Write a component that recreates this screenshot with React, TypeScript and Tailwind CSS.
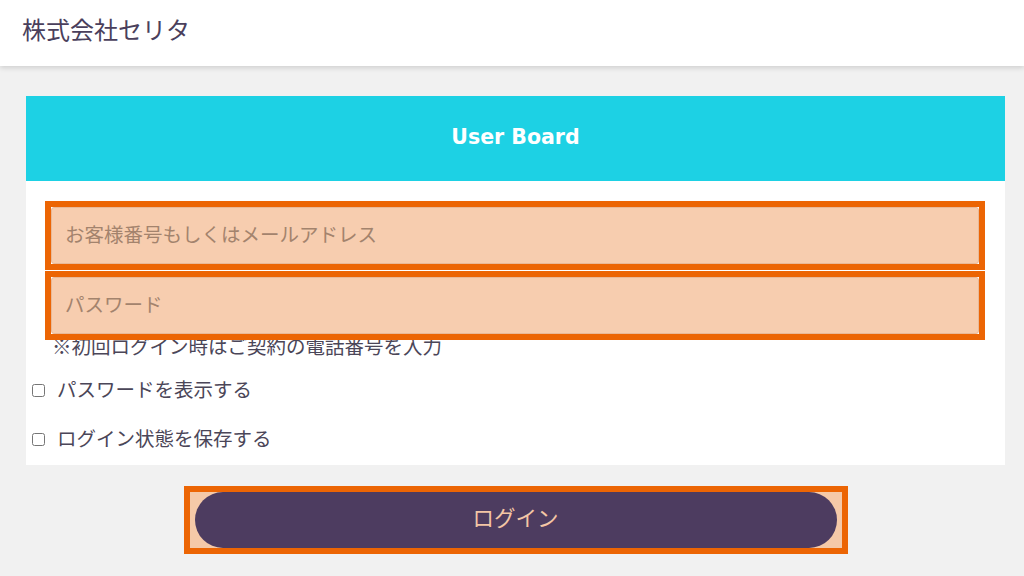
import React, { useState } from "react";

const jp = "font-['Noto_Sans_CJK_JP','Noto_Sans',sans-serif]";

const CheckRow: React.FC<{ label: string }> = ({ label }) => {
  const [checked, setChecked] = useState(false);
  return (
    <label className="flex h-[49px] items-center pl-[6px] cursor-pointer">
      <input
        type="checkbox"
        checked={checked}
        onChange={(e) => setChecked(e.target.checked)}
        className="m-0 h-[13px] w-[13px]"
      />
      <span className="mb-[4px] ml-[12px] text-[19.5px] leading-none text-[#4b4658]">
        {label}
      </span>
    </label>
  );
};

const FieldBox: React.FC<{ placeholder: string; type?: string }> = ({
  placeholder,
  type = "text",
}) => {
  const [value, setValue] = useState("");
  return (
    <div className="h-[57px] outline-[6px] outline-solid outline-[#ec6504]">
      <input
        type={type}
        value={value}
        placeholder={placeholder}
        onChange={(e) => setValue(e.target.value)}
        className="block h-full w-full rounded-[3px] border border-[#e9b998] bg-[#f7cdaf] pb-[5px] pl-[13px] text-[19.5px] text-[#4b4658] placeholder:text-[#a3836d] focus:outline-none"
      />
    </div>
  );
};

export default function App() {
  return (
    <div className={`min-h-screen bg-[#f1f1f1] ${jp}`}>
      <header className="relative z-10 flex h-[66px] items-center bg-white pb-[8px] pl-[22px] shadow-[0_2px_5px_rgba(0,0,0,0.14)]">
        <h1 className="text-[24px] leading-none text-[#4a3f5c]">
          株式会社セリタ
        </h1>
      </header>

      <main className="ml-[26px] mr-[19px] pt-[30px]">
        <div className="bg-white">
          <div className="flex h-[85px] items-center justify-center bg-[#1dd1e4] pb-[2px]">
            <h2 className="font-['DejaVu_Sans',sans-serif] text-[20.5px] font-bold text-white">
              User Board
            </h2>
          </div>

          <div className="pt-[26px]">
            <div className="pl-[25px] pr-[26px]">
              <FieldBox placeholder="お客様番号もしくはメールアドレス" />
              <div className="mt-[13px]">
                <FieldBox placeholder="パスワード" type="password" />
              </div>
              <p className="-mt-[2px] pb-[2px] pl-[1px] text-[19.5px] leading-[27px] text-[#4b4658]">
                ※初回ログイン時はご契約の電話番号を入力
              </p>
            </div>

            <div className="mt-[5px] pb-[1px]">
              <CheckRow label="パスワードを表示する" />
              <CheckRow label="ログイン状態を保存する" />
            </div>
          </div>
        </div>

        <div className="mx-auto mt-[27px] h-[56px] w-[652px] bg-[#f5c9a8] px-[5px] outline-[6px] outline-solid outline-[#ec6504]">
          <button
            type="submit"
            className="h-full w-full rounded-full bg-[#4d3c60] pb-[5px] text-[21.5px] text-[#f3c6a5]"
          >
            ログイン
          </button>
        </div>
      </main>
    </div>
  );
}
